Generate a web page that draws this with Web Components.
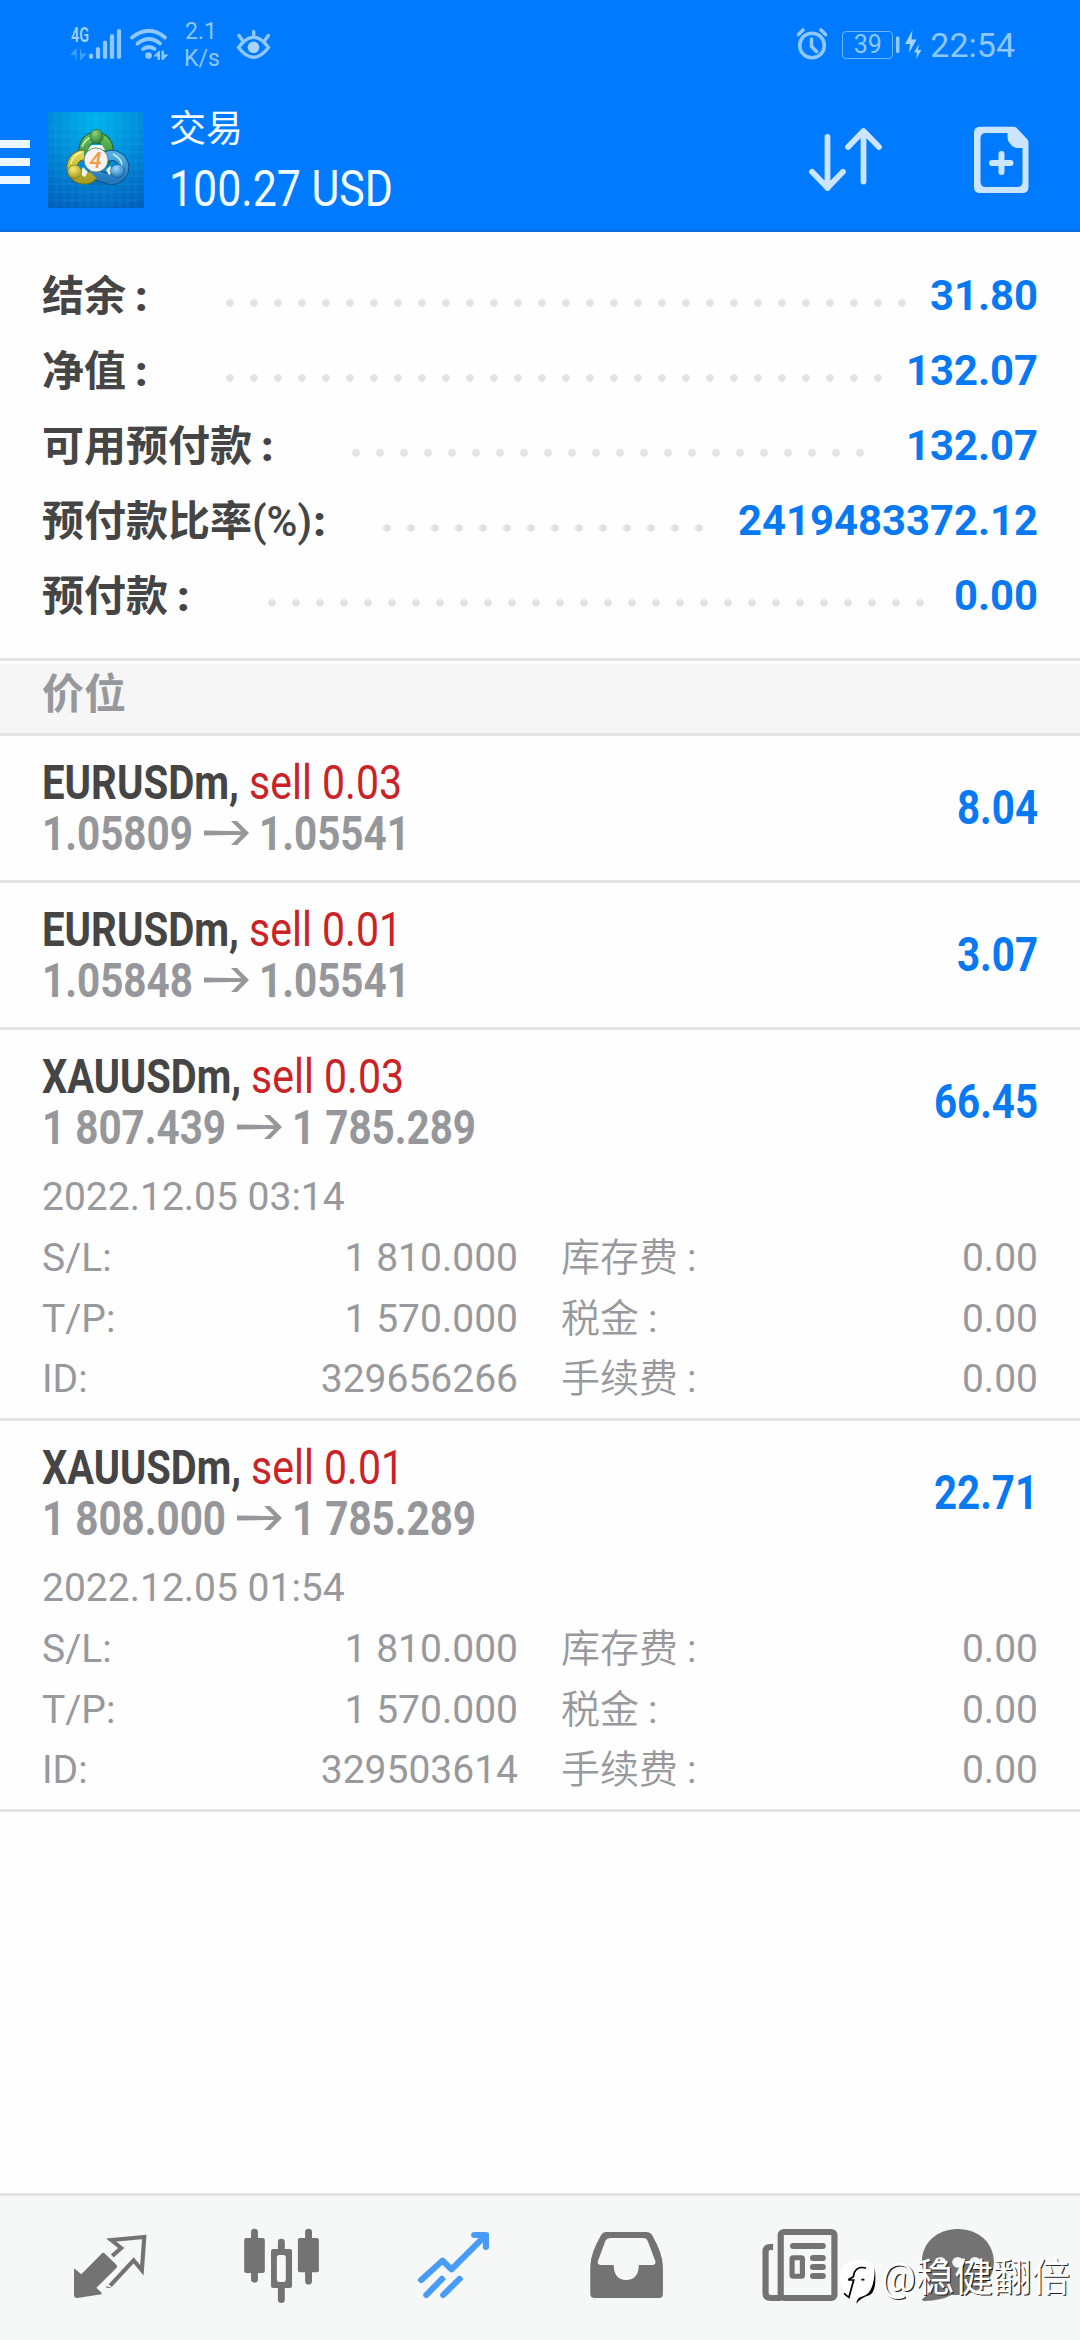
<!DOCTYPE html>
<html lang="zh-CN">
<head>
<meta charset="utf-8">
<title>交易</title>
<style>
html,body{margin:0;padding:0}
body{width:1080px;height:2340px;overflow:hidden;background:#fefefe;font-family:Roboto,"Noto Sans CJK SC",sans-serif}
</style>
</head>
<body>
<trade-app></trade-app>
<script>
const define = (name, html, init) => customElements.define(name, class extends HTMLElement {
  connectedCallback() {
    if (this.shadowRoot) return;
    const t = document.createElement('template');
    t.innerHTML = typeof html === 'function' ? html(k => this.getAttribute(k) || '', this) : html;
    this.attachShadow({mode: 'open'}).append(t.content.cloneNode(true));
    if (init) init(this);
  }
});

/* Text squeezed horizontally to a given advance width. */
define('fit-text', a => `<style>
:host{display:block;flex:none;width:${a('w')}px;white-space:nowrap}
span{display:inline-block;transform-origin:0 50%}</style><span><slot></slot></span>`,
el => {
  const s = el.shadowRoot.querySelector('span');
  const n = s.getBoundingClientRect().width;
  if (n) s.style.transform = `scaleX(${el.getAttribute('w') / n})`;
});

define('status-bar', `<style>
:host{display:flex;height:60px;color:#8fc8ff;position:relative}
svg{display:block;flex:none}
.speed{width:52px;padding-top:18px;font-size:23px;line-height:27px;height:60px;box-sizing:border-box}
.speed div:first-child{padding-left:1px}
.right{margin-left:auto;display:flex;padding-right:65px}
.bat{box-sizing:border-box;width:51px;height:28px;margin:31px 0 0 14px;border:1.5px solid #6db6ff;border-radius:4px;font-size:25px;line-height:26px;text-align:center}
.time{font-size:34px;line-height:90px;height:60px}
</style>
<svg width="184" height="60" viewBox="0 0 184 60">
  <text x="71" y="41.500" font-size="19.500" font-weight="600" font-family="Roboto" fill="#9fd0ff" textLength="18" lengthAdjust="spacingAndGlyphs">4G</text>
  <path d="M76 60V49l-5 5.500h3.500M80.500 49v11l5.500-6h-4" fill="#3f9dff" stroke="#3f9dff"/>
  <g stroke="#8fc8ff" stroke-width="4.200" stroke-linecap="round"><path d="M91 55.500v1.500M98 49v8M105 42.500v14.500M112 36v21M119 31v26"/></g>
  <g fill="none" stroke="#8fc8ff" stroke-width="3.800" stroke-linecap="round"><path d="M132 37.500Q149 24 165 37.500M137.500 43.500Q149 34.500 160 43.500M143 49Q149 45 154.500 49"/></g>
  <circle cx="148.500" cy="55.500" r="3.300" fill="#8fc8ff"/>
  <path d="M159.500 51v9h-1.500v-4h-4zM162 51h1.500v4h4l-5.500 5.500z" fill="#8fc8ff" stroke="#8fc8ff"/>
</svg>
<div class="speed"><div>2.1</div><div>K/s</div></div>
<svg width="36" height="62" viewBox="236 0 36 62"><g fill="none" stroke="#8fc8ff" stroke-width="3.400" stroke-linecap="round"><path d="M238.500 47.500Q253.500 27 268.500 47.500Q253.500 67 238.500 47.500ZM253.700 31.500v5M239 35.500l3.500 5M268.300 35.500l-3.500 5"/></g><circle cx="253.500" cy="47.300" r="5.800" fill="#a9d5ff"/></svg>
<div class="right">
  <svg width="32" height="62" viewBox="796 0 32 62"><g fill="none" stroke="#8fc8ff" stroke-width="3.600" stroke-linecap="round"><circle cx="812" cy="45.500" r="12.300"/><path d="M811.500 39v7.500l5 5M798.500 34.500l4.500-4.500M825.500 34.500l-4.500-4.500"/></g></svg>
  <div class="bat">39</div>
  <svg width="37" height="62" viewBox="893 0 37 62"><path d="M897.700 38v13.500" stroke="#8fc8ff" stroke-width="3.600" stroke-linecap="round"/><path d="M912.500 30l-7.500 14h5l-1 9 7.500-13.500h-5zM919 44l-5 8.500h3l-.800 6.500 5.200-9h-3.400z" fill="#a3d3ff"/></svg>
  <div class="time">22:54</div>
</div>`);

define('app-header', `<style>
:host{display:block;height:232px;box-sizing:border-box;background:#007aff;border-bottom:3px solid #0971df;color:#f2fbff}
.bar{display:flex;align-items:flex-start}
svg{display:block;flex:none}
.menu{margin-top:80px}.logo{margin:52px 0 0 18px}
.t{padding:46px 0 0 25px}
.a{font-size:37px;line-height:48px}.b{margin-top:5px;font-size:50px;line-height:60px}
.acts{margin-left:auto;display:flex;gap:91px;padding:64px 51px 0 0}
</style>
<status-bar></status-bar>
<div class="bar">
  <svg class="menu" width="30" height="44"><path d="M0 0h30v8H0zM0 18h30v8H0zM0 36h30v8H0z" fill="#ecf7ff"/></svg>
  <svg class="logo" width="96" height="96" viewBox="0 0 96 96">
    <defs>
      <radialGradient id="bg" cx=".5" cy=".08" r="1"><stop offset="0" stop-color="#00b4ee"/><stop offset=".55" stop-color="#0086d6"/><stop offset="1" stop-color="#0060bb"/></radialGradient>
      <radialGradient id="g" cx=".4" cy=".3" r=".8"><stop offset="0" stop-color="#8dd47b"/><stop offset="1" stop-color="#1e6f2b"/></radialGradient>
      <radialGradient id="y" cx=".4" cy=".3" r=".8"><stop offset="0" stop-color="#f8ee7c"/><stop offset="1" stop-color="#9c8c10"/></radialGradient>
      <radialGradient id="u" cx=".4" cy=".3" r=".8"><stop offset="0" stop-color="#9adcff"/><stop offset="1" stop-color="#1566ac"/></radialGradient>
      <linearGradient id="gr" x1="0" y1="0" x2="0" y2="1"><stop offset="0" stop-color="#63bd58"/><stop offset="1" stop-color="#2d8038"/></linearGradient>
      <linearGradient id="yr" x1="0" y1="0" x2="0" y2="1"><stop offset="0" stop-color="#e2d84f"/><stop offset="1" stop-color="#a99f25"/></linearGradient>
      <linearGradient id="ur" x1="0" y1="0" x2="0" y2="1"><stop offset="0" stop-color="#52aee6"/><stop offset="1" stop-color="#2479bd"/></linearGradient>
    </defs>
    <rect width="96" height="96" fill="url(#bg)"/>
    <path d="M8 0v96M16 0v96M24 0v96M32 0v96M40 0v96M48 0v96M56 0v96M64 0v96M72 0v96M80 0v96M88 0v96M0 16h96M0 24h96M0 32h96M0 40h96M0 48h96M0 56h96M0 64h96M0 72h96M0 80h96M0 88h96" stroke="#5ccfff" stroke-opacity=".13"/>
    <ellipse cx="49" cy="69" rx="27" ry="4" fill="#024a86" opacity=".3"/>
    <g fill="none">
      <path d="M37 42A12 12 0 1 1 60 38Q60 46 55 51" stroke="#1d6130" stroke-width="11"/>
      <path d="M37 42A12 12 0 1 1 60 38Q60 46 55 51" stroke="url(#gr)" stroke-width="9"/>
      <path d="M58 45A12 12 0 1 1 58 66Q48 65 44 56" stroke="#0f528b" stroke-width="11"/>
      <path d="M58 45A12 12 0 1 1 58 66Q48 65 44 56" stroke="url(#ur)" stroke-width="9"/>
      <path d="M45 63A12 12 0 1 1 36 43" stroke="#76701b" stroke-width="11"/>
      <path d="M45 63A12 12 0 1 1 36 43" stroke="url(#yr)" stroke-width="9"/>
      <path d="M34 35Q37 27 44 25M23 52Q25 42 34 40M65 42Q75 47 74 56" stroke="#f0ffd2" stroke-width="1.400" opacity=".8"/>
    </g>
    <path d="M43 33h11l3 5H40zM32 62l3-7 5 5-3 5zM62 54l4 6-5 3-3-5z" fill="#e9f5ef"/>
    <ellipse cx="48.500" cy="24.500" rx="6.500" ry="7.200" fill="url(#g)" stroke="#1d6130" stroke-width=".6"/><ellipse cx="26.700" cy="59.700" rx="7" ry="6.600" fill="url(#y)" stroke="#76701b" stroke-width=".6"/><ellipse cx="69.500" cy="59" rx="7" ry="6.600" fill="url(#u)" stroke="#0f528b" stroke-width=".6"/>
    <circle cx="48" cy="48" r="12" fill="#f6f4f2" stroke="#5c7864" stroke-width=".8"/>
    <text x="47.500" y="55.500" text-anchor="middle" font-family="Roboto" font-size="22" font-weight="500" font-style="italic" fill="#f59b3b">4</text>
  </svg>
  <div class="t"><div class="a">交易</div><fit-text class="b" w="224">100.27 USD</fit-text></div>
  <div class="acts">
    <svg width="75" height="70" viewBox="808.500 124 75 70"><path d="M828 137v51M812.500 171.800l15.500 16 15.500-16M864 181.500V131.500M848.500 147l15.500-16 15.500 16" fill="none" stroke="#cce5ff" stroke-width="5.800" stroke-linecap="round" stroke-linejoin="round"/></svg>
    <svg width="55" height="70" viewBox="974.500 124 55 70"><path fill-rule="evenodd" fill="#cce5ff" d="M980.500 126.700H1014q2 0 3 1L1028 139.500q1 1 1 3V187q0 6-6 6H980.500q-6 0-6-6V132.700q0-6 6-6ZM986.500 133q-5.500 0-5.500 5.500V181.500q0 5.500 5.500 5.500H1017.500q5.500 0 5.500-5.500V148H1019Q1013.500 148 1010.500 143.500Q1008 141 1008 138V133Z"/><path d="M1002 154v18M992.500 163h18.500" stroke="#cce5ff" stroke-width="6" stroke-linecap="round"/></svg>
  </div>
</div>`);

define('summary-row', a => `<style>
:host{display:flex;height:75px;line-height:75px;padding:0 42px;font-size:42px;font-weight:700}
.l{flex:none;width:${a('lead') - 54}px;color:#454545;white-space:nowrap;font-weight:600;line-height:77px;height:75px}
.l b{margin-left:${a('colon') || 9}px}
.d{flex:none;width:${a('dots') * 24}px;height:10px;margin-top:40px;background:radial-gradient(circle at 50% 50%,#e3e3e3 3.400px,transparent 4.200px) 0 0/24px 10px}
.v{margin-left:auto;color:#0779f3}
::slotted(i){font-style:normal;font-weight:500}
</style><div class="l"><slot></slot><b>:</b></div><div class="d"></div><fit-text class="v" w="${a('w')}">${a('value')}</fit-text>`);

define('account-summary', `<style>
:host{display:block;box-sizing:border-box;padding-top:26px;border-bottom:3px solid #e4e4e4}</style>
<summary-row lead="230" dots="29" value="31.80" w="108">结余</summary-row>
<summary-row lead="230" dots="28" value="132.07" w="132">净值</summary-row>
<summary-row lead="356" dots="22" value="132.07" w="132">可用预付款</summary-row>
<summary-row lead="387" dots="14" colon="1" value="2419483372.12" w="300">预付款比率<i>(%)</i></summary-row>
<summary-row lead="272" dots="28" value="0.00" w="84">预付款</summary-row>`);

define('section-title', `<style>
:host{display:block;margin-top:3px;height:72px;box-sizing:border-box;background:#f6f6f6;border-bottom:3px solid #e4e4e4;padding-left:42px;font-size:42px;line-height:62px;font-weight:600;color:#97989c}</style><slot></slot>`);

define('position-item', a => `<style>
:host{display:block;height:${a('date') ? 388 : 144}px;border-bottom:3px solid #e4e4e4}
.head{display:flex;align-items:center;justify-content:space-between;height:144px;padding:0 42px}
.r{display:flex;height:51px;line-height:52px;align-items:flex-start;white-space:nowrap;font-size:49px}
.sym{font-weight:700;color:#454545}.sell{margin-left:10px;color:#c92327}
.px{color:#96979b;font-weight:700;font-size:48px}
.px svg{margin:13px 10px 0 11px;flex:none}
.profit{font-size:49px;line-height:50px;font-weight:700;color:#0779f3}
.date,.g{padding:0 42px;font-size:39px;color:#98999c}
.date{line-height:46px;height:44px}
.g{display:grid;margin-top:10px;grid-template-columns:476px 477px;column-gap:43px;grid-auto-rows:60.500px;line-height:60.500px}
.g div{display:flex;justify-content:space-between}
.c b{font-weight:400;margin-left:9px}.c{font-weight:350}.g div>span:last-child{font-weight:400}
</style>
<div class="head"><div>
<div class="r"><fit-text class="sym" w="${a('sw')}">${a('symbol')},</fit-text><fit-text class="sell" w="153">sell ${a('lots')}</fit-text></div>
<div class="r px"><fit-text w="${a('pw')}">${a('from')}</fit-text><svg width="45" height="26" viewBox="0 0 45 26"><path d="M0 9.500L40 10.200V13.800L0 14.500ZM27 0h6L45 12 33 24h-6L39 12Z" fill="#96979b"/></svg><fit-text w="${a('pw')}">${a('to')}</fit-text></div>
</div><fit-text class="profit" w="${a('fw')}">${a('profit')}</fit-text></div>
${a('date') ? `<div class="date">${a('date')}</div><div class="g">
<div><span>S/L:</span><span>${a('sl')}</span></div><div><span class="c">库存费<b>:</b></span><span>0.00</span></div>
<div><span>T/P:</span><span>${a('tp')}</span></div><div><span class="c">税金<b>:</b></span><span>0.00</span></div>
<div><span>ID:</span><span>${a('oid')}</span></div><div><span class="c">手续费<b>:</b></span><span>0.00</span></div></div>` : ''}`);

/* Tab icons are drawn on one shared canvas; dx is each tab's offset in it. */
define('tab-icon', a => `<style>:host{display:block;width:180px;height:144px}svg{display:block}</style>
<svg width="180" height="144"><g transform="translate(${a('dx')} -16) scale(.34437 .33333)">${ {
quotes:'<path d="M215 265L236 283L295 221Q300 216 305 221L338 254Q342 259 338 264L280 323L295 338V343L224 354Q215 354 215 346Z" fill="#737373"/><path d="M326 228L352 204L323 180L419 171L412 271L388 241L320 317" fill="none" stroke="#737373" stroke-width="12"/><path d="M306 319L324 322L312 325Z" fill="#737373"/>',
chart:'<g fill="#737373"><rect x="709" y="174" width="60" height="105" rx="6"/><rect x="865" y="174" width="61" height="103" rx="6"/><path d="M793 207H842Q848 207 848 213V318Q848 324 842 324H793Q787 324 787 318V213Q787 207 793 207Z"/></g><path d="M739 156V298M896 156V304M817 186V207M817 324V359" stroke="#737373" stroke-width="20" stroke-linecap="round"/><rect x="804" y="225" width="26" height="81" rx="7" fill="#f6f7f7"/>',
trade:'<g fill="none" stroke="#489cf6" stroke-width="18" stroke-linecap="round" stroke-linejoin="round"><path d="M1223 300L1285 242L1311 268L1410 166M1377 165H1411V201M1238 345L1283 297M1287 345L1334 297"/></g><path d="M1390 160H1420V200Z" fill="#489cf6"/><path d="M1281 286L1295 298L1283 308ZM1335 287L1346 298L1334 308Z" fill="#489cf6"/>',
inbox:'<path fill-rule="evenodd" fill="#737373" d="M192 156H310Q319 156 325 164Q356 220 357 258V341Q357 354 345 354H159Q146 354 146 341V258Q147 220 177 166Q183 156 192 156ZM204 174Q194 174 190 182L168 244Q166 255 177 255H214Q215 300 250 300Q286 300 287 255H326Q337 255 335 244L313 184Q310 174 300 174Z"/>',
news:'<g fill="none" stroke="#737373" stroke-width="18"><rect x="699" y="156" width="156" height="198" rx="9"/><path d="M677 201H668Q655 201 655 215V340Q655 354 670 354H700"/></g><g stroke="#737373" stroke-width="18" stroke-linecap="round"><path d="M735 198H821M793 234H821M793 261H821M793 288H821"/></g><rect x="732" y="233" width="30" height="56" rx="3" fill="none" stroke="#737373" stroke-width="15"/>',
chat:'<path d="M1213 147C1275 147 1318 190 1318 246C1318 302 1275 345 1213 345H1195Q1165 362 1115 363Q1105 360 1113 355Q1130 345 1135 322Q1109 290 1109 246C1109 190 1152 147 1213 147Z" fill="#737373"/><g fill="#f6f7f7"><circle cx="1163" cy="247" r="16"/><circle cx="1213" cy="247" r="16"/><circle cx="1263" cy="247" r="16"/></g>'
}[a('name')]}</g></svg>`);

define('tab-bar', `<style>:host{display:flex;height:147px;box-sizing:border-box;background:#f6f7f7;border-top:3px solid #e4e4e4}</style>
<tab-icon name="quotes" dx="0"></tab-icon><tab-icon name="chart" dx="-180"></tab-icon><tab-icon name="trade" dx="-360"></tab-icon><tab-icon name="inbox" dx="0"></tab-icon><tab-icon name="news" dx="-180"></tab-icon><tab-icon name="chat" dx="-360"></tab-icon>`);

define('user-badge', `<style>:host{position:absolute;left:838px;top:2250px;display:flex;align-items:flex-start;color:#fff;font-size:39px;line-height:56px}
svg{display:block;width:43px;height:60px}.n{text-shadow:1.200px 1.200px 0 #222}</style>
<svg viewBox="838 2250 43 60"><g transform="translate(540 2180) scale(.34437 .33333)"><path d="M925 241Q978 238 976 296Q977 345 940 353Q930 358 921 368L917 354Q873 350 871 298Q870 242 925 241Z" fill="#fff"/><path d="M972 262Q980 335 956 346Q930 354 919 371Q919 353 938 349Q972 338 972 262Z" fill="#000"/><path d="M947 264Q914 256 910 290L895 299M895 300H911L897 352Q889 347 883 340M933 299H942" fill="none" stroke="#000" stroke-width="5"/></g></svg>
<fit-text class="n" w="189">@稳健翻倍</fit-text>`);

define('trade-app', `<style>
:host{display:flex;flex-direction:column;width:1080px;height:2340px;background:#fefefe;position:relative}
app-header,account-summary,section-title,position-item,tab-bar{flex:none}
account-summary{height:429px}tab-bar{margin-top:auto}
</style>
<app-header></app-header>
<account-summary></account-summary>
<section-title>价位</section-title>
<position-item symbol="EURUSDm" sw="197" lots="0.03" from="1.05809" to="1.05541" pw="151" profit="8.04" fw="81"></position-item>
<position-item symbol="EURUSDm" sw="197" lots="0.01" from="1.05848" to="1.05541" pw="151" profit="3.07" fw="81"></position-item>
<position-item symbol="XAUUSDm" sw="199" lots="0.03" from="1 807.439" to="1 785.289" pw="184" profit="66.45" fw="104" date="2022.12.05 03:14" sl="1 810.000" tp="1 570.000" oid="329656266"></position-item>
<position-item symbol="XAUUSDm" sw="199" lots="0.01" from="1 808.000" to="1 785.289" pw="184" profit="22.71" fw="104" date="2022.12.05 01:54" sl="1 810.000" tp="1 570.000" oid="329503614"></position-item>
<tab-bar></tab-bar>
<user-badge></user-badge>`);
</script>
</body>
</html>
